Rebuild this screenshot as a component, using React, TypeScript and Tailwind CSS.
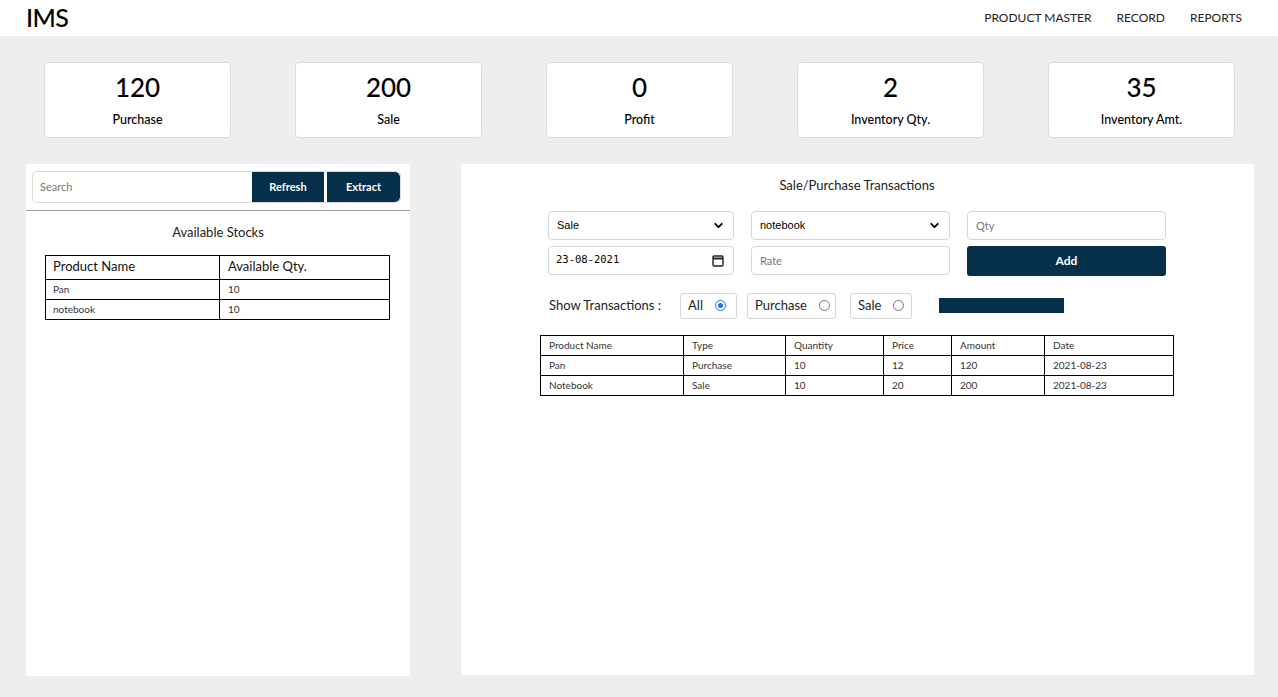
import { ChevronDown } from 'lucide-react'

const stats = [
  { value: '120', label: 'Purchase' },
  { value: '200', label: 'Sale' },
  { value: '0', label: 'Profit' },
  { value: '2', label: 'Inventory Qty.' },
  { value: '35', label: 'Inventory Amt.' },
]

const stocks = [
  { name: 'Pan', qty: '10' },
  { name: 'notebook', qty: '10' },
]

const transactions = [
  { name: 'Pan', type: 'Purchase', qty: '10', price: '12', amount: '120', date: '2021-08-23' },
  { name: 'Notebook', type: 'Sale', qty: '10', price: '20', amount: '200', date: '2021-08-23' },
]

function Radio({ checked }: { checked?: boolean }) {
  return checked ? (
    <span className="w-[11px] h-[11px] rounded-full border-[1.5px] border-[#1a73e8] flex items-center justify-center">
      <span className="w-[5px] h-[5px] rounded-full bg-[#1a73e8]" />
    </span>
  ) : (
    <span className="w-[11px] h-[11px] rounded-full border border-[#767676]" />
  )
}

function FakeSelect({ value }: { value: string }) {
  return (
    <div className="h-[29px] flex items-center justify-between border border-[#d6d6d6] rounded px-[8px] text-[11px] text-black font-['Liberation_Sans',Arial,sans-serif]">
      <span>{value}</span>
      <ChevronDown className="w-[13px] h-[13px]" strokeWidth={3.5} />
    </div>
  )
}

export default function App() {
  return (
    <div className="min-h-[697px] bg-[#edeef0] font-['Lato',sans-serif] text-[#111]">
      {/* Header */}
      <header className="h-[36px] bg-white flex items-center justify-between pl-[26px] pr-[36px]">
        <h1 className="text-[25px] font-medium tracking-tight text-black">IMS</h1>
        <nav className="flex gap-[25px] text-[12px] text-[#222]">
          <span>PRODUCT MASTER</span>
          <span>RECORD</span>
          <span>REPORTS</span>
        </nav>
      </header>

      {/* Stat cards */}
      <div className="flex gap-[64px] pl-[44px] pt-[26px]">
        {stats.map((s) => (
          <div
            key={s.label}
            className="w-[187px] h-[76px] bg-white border border-[#dcdde0] rounded-[4px] flex flex-col items-center pt-[8px]"
          >
            <div className="text-[26px] leading-[32px] font-medium text-black">{s.value}</div>
            <div className="text-[12.5px] font-medium mt-[8px] text-black">{s.label}</div>
          </div>
        ))}
      </div>

      {/* Panels */}
      <div className="flex gap-[51px] pl-[26px] pt-[26px]">
        {/* Left */}
        <div className="w-[384px] h-[512px] bg-white">
          <div className="pl-[6px] pr-[9px] pt-[7px]">
            <div className="h-[32px] flex border border-[#d8d8d8] rounded-[5px] overflow-hidden">
              <input
                placeholder="Search"
                className="flex-1 min-w-0 px-[7px] text-[11px] outline-none placeholder:text-[#777]"
              />
              <button className="w-[72px] bg-[#06304a] text-white text-[11px] font-bold">Refresh</button>
              <button className="w-[73px] ml-[3px] bg-[#06304a] text-white text-[11px] font-bold rounded-r-[5px]">
                Extract
              </button>
            </div>
          </div>
          <div className="mt-[7px] border-t border-[#9a9a9a]" />
          <div className="text-center text-[13px] mt-[12px] text-[#222]">Available Stocks</div>
          <table className="mt-[12px] ml-[19px] w-[345px] border-collapse border border-black">
            <thead>
              <tr className="h-[24px] text-[13px] text-left">
                <th className="font-normal border border-black pl-[7px] w-[174px]">Product Name</th>
                <th className="font-normal border border-black pl-[8px]">Available Qty.</th>
              </tr>
            </thead>
            <tbody>
              {stocks.map((r) => (
                <tr key={r.name} className="h-[20px] text-[10px] text-[#333]">
                  <td className="border border-black pl-[7px]">{r.name}</td>
                  <td className="border border-black pl-[8px]">{r.qty}</td>
                </tr>
              ))}
            </tbody>
          </table>
        </div>

        {/* Right */}
        <div className="w-[793px] h-[511px] bg-white">
          <div className="text-center text-[13px] mt-[12px] text-[#222] pr-[1px]">Sale/Purchase Transactions</div>

          <div className="grid grid-cols-[186px_199px_199px] gap-x-[17px] gap-y-[6px] ml-[87px] mt-[15px]">
            <FakeSelect value="Sale" />
            <FakeSelect value="notebook" />
            <input
              placeholder="Qty"
              className="h-[29px] border border-[#d6d6d6] rounded px-[8px] text-[11px] outline-none placeholder:text-[#777]"
            />
            <div className="h-[29px] flex items-center justify-between border border-[#d6d6d6] rounded pl-[7px] pr-[9px] font-['DejaVu_Sans_Mono',monospace] text-[10.5px] text-black">
              <span>23-08-2021</span>
              <svg width="12" height="13" viewBox="0 0 12 13" fill="none" stroke="#222" strokeWidth="1.4">
                <rect x="1" y="2" width="10" height="10" rx="1" />
                <path d="M1 4.5h10" strokeWidth="2" />
              </svg>
            </div>
            <input
              placeholder="Rate"
              className="h-[29px] border border-[#d6d6d6] rounded px-[8px] text-[11px] outline-none placeholder:text-[#777]"
            />
            <button className="h-[30px] bg-[#06304a] text-white text-[12px] font-bold rounded-[3px]">Add</button>
          </div>

          <div className="flex items-center ml-[88px] mt-[17px] text-[13px] text-[#222]">
            <span>Show Transactions :</span>
            <label className="ml-[19px] h-[26px] w-[57px] border border-[#d6d6d6] rounded-[3px] flex items-center pl-[7px] gap-[12px]">
              All <Radio checked />
            </label>
            <label className="ml-[10px] h-[26px] w-[89px] border border-[#d6d6d6] rounded-[3px] flex items-center pl-[7px] gap-[12px]">
              Purchase <Radio />
            </label>
            <label className="ml-[14px] h-[26px] w-[62px] border border-[#d6d6d6] rounded-[3px] flex items-center pl-[7px] gap-[12px]">
              Sale <Radio />
            </label>
            <div className="ml-[27px] w-[125px] h-[15px] bg-[#06304a]" />
          </div>

          <table className="mt-[16px] ml-[79px] w-[634px] border-collapse border border-black text-[10px] text-[#333] text-left">
            <thead>
              <tr className="h-[20px]">
                <th className="font-normal border border-black pl-[8px] w-[143px]">Product Name</th>
                <th className="font-normal border border-black pl-[8px] w-[102px]">Type</th>
                <th className="font-normal border border-black pl-[8px] w-[98px]">Quantity</th>
                <th className="font-normal border border-black pl-[8px] w-[68px]">Price</th>
                <th className="font-normal border border-black pl-[8px] w-[93px]">Amount</th>
                <th className="font-normal border border-black pl-[8px]">Date</th>
              </tr>
            </thead>
            <tbody>
              {transactions.map((t) => (
                <tr key={t.name} className="h-[20px]">
                  <td className="border border-black pl-[8px]">{t.name}</td>
                  <td className="border border-black pl-[8px]">{t.type}</td>
                  <td className="border border-black pl-[8px]">{t.qty}</td>
                  <td className="border border-black pl-[8px]">{t.price}</td>
                  <td className="border border-black pl-[8px]">{t.amount}</td>
                  <td className="border border-black pl-[8px]">{t.date}</td>
                </tr>
              ))}
            </tbody>
          </table>
        </div>
      </div>
    </div>
  )
}
